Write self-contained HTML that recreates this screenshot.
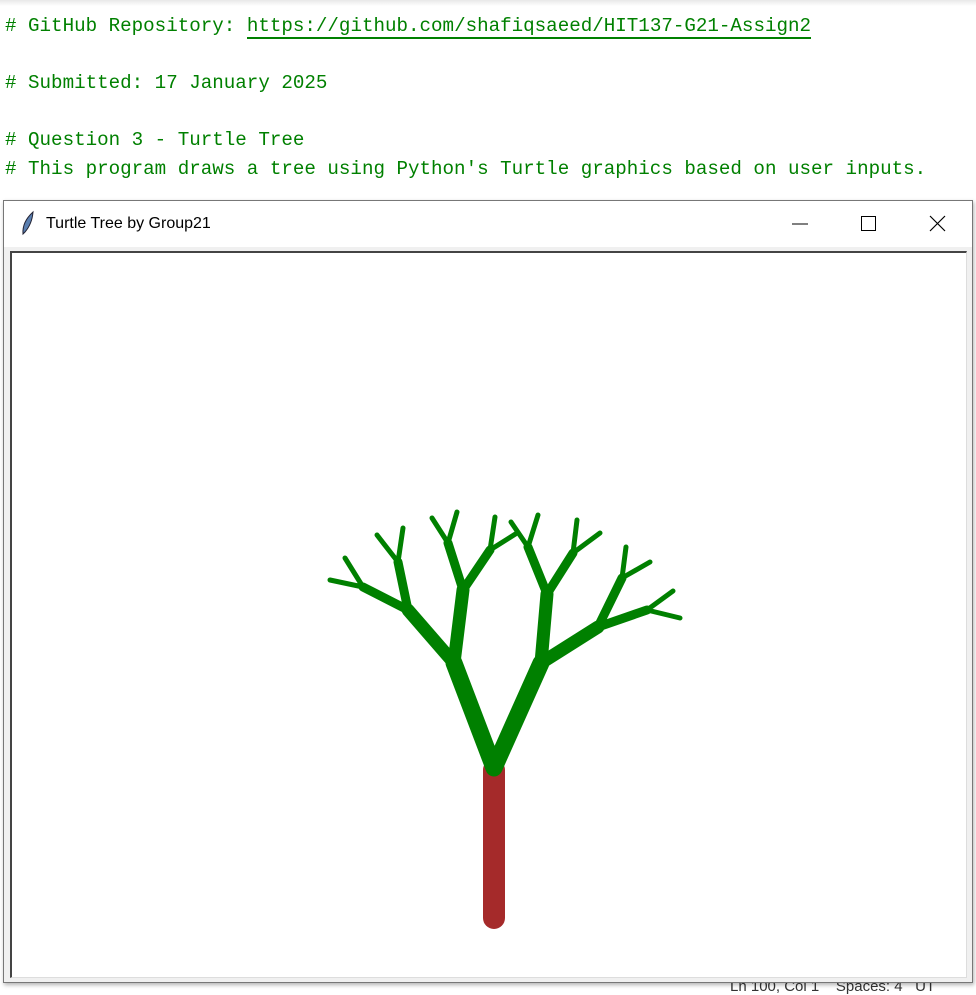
<!DOCTYPE html>
<html><head><style>
body{margin:0;width:976px;height:989px;background:#fff;position:relative;overflow:hidden;font-family:"Liberation Mono",monospace}
.l{position:absolute;left:5px;font-size:19.2px;color:#008000;white-space:pre;line-height:22px}
.top{position:absolute;left:0;top:0;width:976px;height:6px;background:linear-gradient(#e8e8e8,#fff)}
.win{position:absolute;left:3px;top:200px;width:968px;height:781px;border:1px solid #777;background:#f0f0f0;box-shadow:1px 2px 4px rgba(0,0,0,.3)}
.tb{position:absolute;left:0;top:0;width:968px;height:46px;background:#fff}
.title{position:absolute;left:42px;top:14px;font:16px "Liberation Sans",sans-serif;color:#000}
.cv{position:absolute;left:6px;top:50px;width:954px;height:724px;background:#fff;border-top:2px solid #444;border-left:2px solid #444;border-right:1px solid #ddd;border-bottom:1px solid #ddd}
.status{position:absolute;left:730px;top:978px;font:15px "Liberation Sans",sans-serif;color:#333}
</style></head><body>
<div class="top"></div>
<div class="l" style="top:15px"># GitHub Repository: <span style="border-bottom:2px solid #008000">https://github.com/shafiqsaeed/HIT137-G21-Assign2</span></div>
<div class="l" style="top:72px"># Submitted: 17 January 2025</div>
<div class="l" style="top:129px"># Question 3 - Turtle Tree</div>
<div class="l" style="top:158px"># This program draws a tree using Python's Turtle graphics based on user inputs.</div>
<div class="status">Ln 100, Col 1&nbsp;&nbsp;&nbsp;&nbsp;Spaces: 4&nbsp;&nbsp;&nbsp;UT</div>
<div class="win">
<div class="tb">
<svg style="position:absolute;left:16px;top:9px" width="16" height="26" viewBox="0 0 16 26"><path d="M3 24 Q2 12 13 2 Q12 14 5 22 Z" fill="#5a7fb0" stroke="#223" stroke-width="1"/></svg>
<div class="title">Turtle Tree by Group21</div>
<svg style="position:absolute;left:780px;top:14px" width="170" height="18"><line x1="8" y1="9" x2="24" y2="9" stroke="#000" stroke-width="1"/><rect x="77.5" y="1.5" width="14" height="14" fill="none" stroke="#000"/><path d="M146 1 L161 16 M161 1 L146 16" stroke="#000" stroke-width="1.2"/></svg>
</div>
<div class="cv"></div>
</div>
<svg style="position:absolute;left:0;top:0" width="976" height="989" fill="none" stroke-linecap="round">
<line x1="494" y1="770" x2="494" y2="918" stroke="#a52a2a" stroke-width="22"/>
<g stroke="#008000">
<path d="M494 768 L454 663 M494 768 L541 663" stroke-width="17"/>
<path d="M454 663 L408 610 M454 663 L463 590 M541 663 L547 594 M541 663 L598 627" stroke-width="13"/>
<path d="M408 610 L363 587 M408 610 L398 562 M463 590 L448 543 M463 590 L490 550 M547 594 L528 547 M547 594 L573 553 M598 627 L622 578 M598 627 L647 610" stroke-width="9"/>
<path d="M363 587 L330 580 M363 587 L345 558 M398 562 L377 535 M398 562 L403 528 M448 543 L432 518 M448 543 L457 512 M490 550 L495 517 M490 550 L517 533 M528 547 L511 522 M528 547 L538 515 M573 553 L577 520 M573 553 L600 533 M622 578 L626 547 M622 578 L650 562 M647 610 L680 618 M647 610 L673 591" stroke-width="5"/>
</g>
</svg>
</body></html>
